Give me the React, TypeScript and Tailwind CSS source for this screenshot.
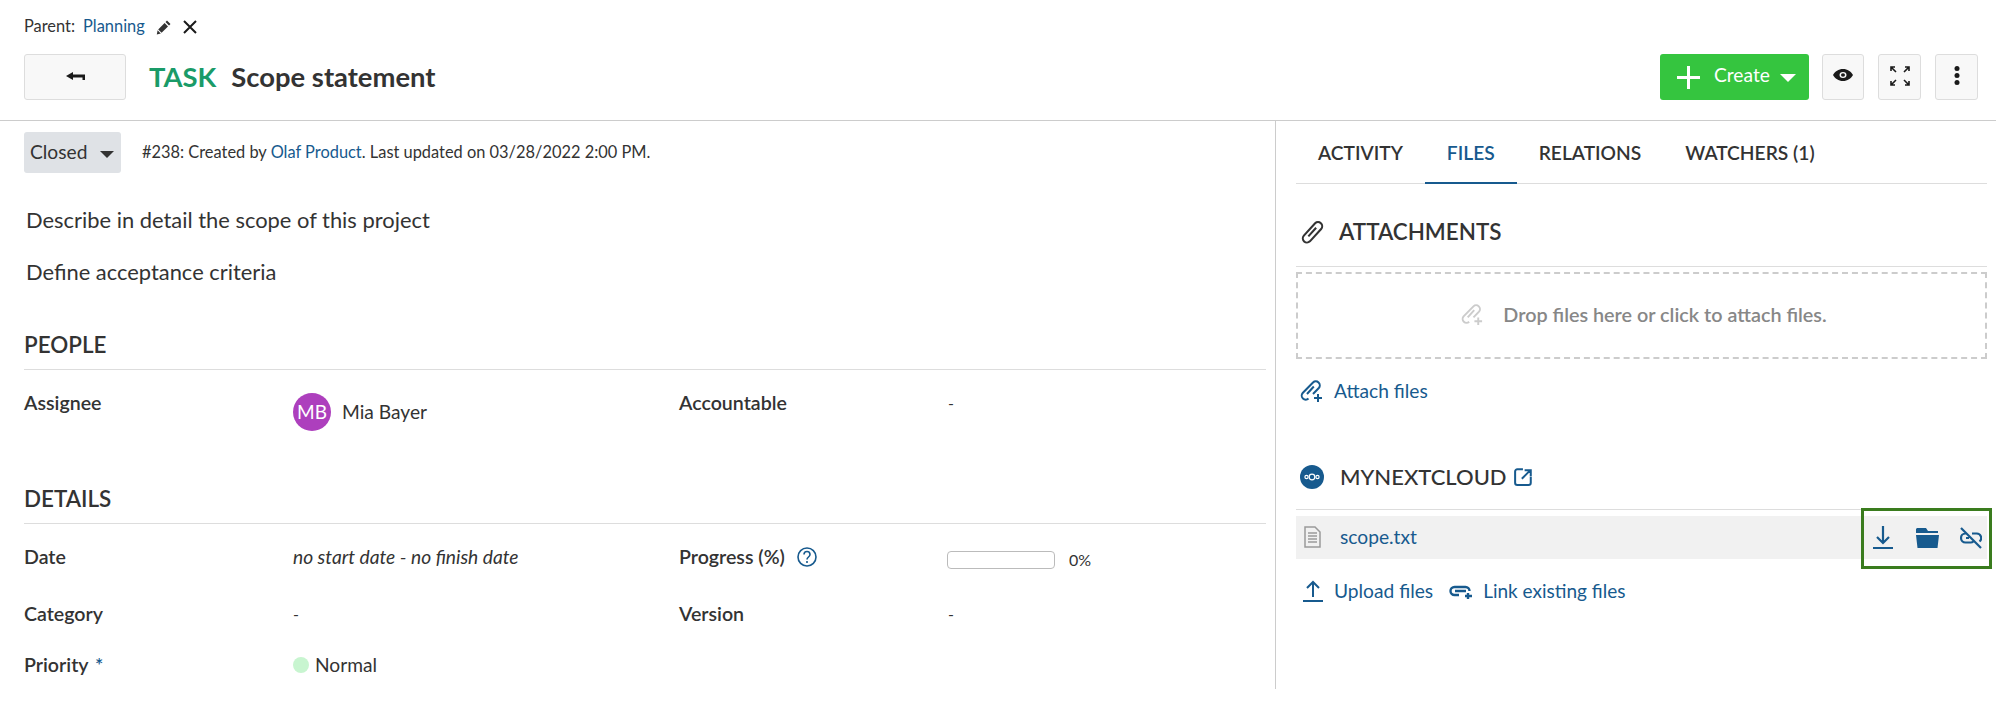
import type { ReactNode } from "react";

const blue = "#175a8e";

function Clip({ plus, size, className }: { plus?: boolean; size: number; className?: string }) {
  return (
    <svg width={size} height={size} viewBox="0 0 24 24" fill="none" stroke="currentColor" strokeWidth="2" className={className}>
      <path d={plus ? "M13 3.500a4 4 0 0 1 5.800 5.500L13 15M8.500 19.500a4 4 0 0 1-5.800-5.500L13 3.500M13.800 7.500 7 15" : "M14.500 3.200a4 4 0 0 1 5.800 5.500L9.500 20.500a4 4 0 0 1-5.800-5.500ZM15.500 7.500 8 15.700"} />
      {plus && <path d="M18 15v8M14 19h8" />}
    </svg>
  );
}

function SectionTitle({ children }: { children: ReactNode }) {
  return <h3 className="text-[22.4px] leading-[24px] font-semibold text-[#333] border-b border-[#dddddd] pb-[12px]">{children}</h3>;
}

function Label({ children }: { children: ReactNode }) {
  return <div className="text-[19.6px] leading-[24px] font-semibold text-[#333]">{children}</div>;
}

function Field({ label, children, className }: { label: ReactNode; children: ReactNode; className?: string }) {
  return (
    <div className={`flex ${className ?? ""}`}>
      <div className="w-[269px] shrink-0"><Label>{label}</Label></div>
      <div className="text-[16px] leading-[24px] text-[#333]">{children}</div>
    </div>
  );
}

function IconButton({ children, className }: { children: ReactNode; className?: string }) {
  return (
    <button className={`h-[46px] flex items-center justify-center bg-[#f8f8f8] border border-[#dddddd] rounded-[3px] text-[#1a1a1a] ${className ?? ""}`}>
      {children}
    </button>
  );
}

export default function App() {
  return (
    <div className="h-[709px] w-full overflow-hidden bg-white font-[Lato,sans-serif] text-[#333]">
      {/* Parent line */}
      <div className="h-[54px] pl-[24px] pt-[16px] flex items-start text-[16.4px] leading-[20px]">
        <span>Parent:</span>
        <a className="ml-[8px] text-[#175a8e]">Planning</a>
        <svg width="16" height="16" viewBox="0 0 16 16" className="ml-[11px] mt-[3px] text-[#333]" fill="currentColor">
          <path d="M11 1.500 14.500 5 13 6.500 9.500 3zM8.600 4l3.400 3.400L5.600 13.800 2.200 10.400zM1.600 11.200l3.200 3.200-4 1z" />
        </svg>
        <svg width="14" height="14" viewBox="0 0 14 14" className="ml-[11px] mt-[4px] text-[#1a1a1a]" stroke="currentColor" strokeWidth="2" fill="none">
          <path d="M1 1l12 12M13 1 1 13" />
        </svg>
      </div>

      {/* Toolbar */}
      <div className="h-[66px] pl-[24px] pr-[18px] flex items-start border-b border-[#cccccc] box-content">
        <IconButton className="w-[102px]">
          <svg width="19" height="8" viewBox="0 0 19 8" fill="currentColor" className="-mt-[2px]">
            <path d="M0 4 7 0v2.500h12V8h-2.500V5.500H7V8z" />
          </svg>
        </IconButton>
        <h2 className="ml-[23px] mt-[6px] text-[27.4px] leading-[34px] font-bold flex">
          <span className="text-[#1a9b68]">TASK</span>
          <span className="ml-[15px] text-[#333]">Scope statement</span>
        </h2>
        <div className="ml-auto flex">
          <button className="w-[149px] h-[46px] flex items-center bg-[#35c53f] rounded-[3px] text-white text-[19.2px] pl-[17px]">
            <svg width="23" height="23" viewBox="0 0 23 23" stroke="currentColor" strokeWidth="3" fill="none">
              <path d="M11.500 0v23M0 11.500h23" />
            </svg>
            <span className="ml-[14px] -mt-[4px]">Create</span>
            <span className="ml-[10px] w-0 h-0 border-x-[8px] border-x-transparent border-t-[8px] border-t-white mt-[2px]" />
          </button>
          <IconButton className="ml-[13px] w-[42px]">
            <svg width="20" height="12" viewBox="0 0 20 14" fill="currentColor" preserveAspectRatio="none" className="-mt-[4px]">
              <path fillRule="evenodd" d="M10 0c4.500 0 8 3 10 7-2 4-5.500 7-10 7S2 11 0 7c2-4 5.500-7 10-7zm0 3.500a3.500 3.500 0 1 0 0 7 3.500 3.500 0 0 0 0-7z" />
              <circle cx="10" cy="7" r="2" />
            </svg>
          </IconButton>
          <IconButton className="ml-[14px] w-[43px]">
            <svg width="20" height="20" viewBox="0 0 20 20" stroke="currentColor" strokeWidth="1.600" fill="none" className="-mt-[2px]">
              <path d="M1 5V1h4M1 1l5 5M15 1h4v4M19 1l-5 5M1 15v4h4M1 19l5-5M19 15v4h-4M19 19l-5-5" />
            </svg>
          </IconButton>
          <IconButton className="ml-[14px] w-[43px]">
            <svg width="6" height="19" viewBox="0 0 6 19" fill="currentColor" className="-mt-[3px]">
              <circle cx="3" cy="2.500" r="2.500" />
              <circle cx="3" cy="9.500" r="2.500" />
              <circle cx="3" cy="16.500" r="2.500" />
            </svg>
          </IconButton>
        </div>
      </div>

      <div className="flex">
        {/* Left column */}
        <div className="w-[1276px] h-[568px] shrink-0 border-r border-[#cccccc] pl-[24px] pr-[9px] pt-[11px]">
          <div className="flex items-center">
            <button className="w-[97px] h-[41px] flex items-center bg-[#dfe2e6] rounded-[3px] pl-[6px] text-[19.2px] text-[#333]">
              Closed
              <span className="ml-[13px] w-0 h-0 border-x-[7px] border-x-transparent border-t-[7px] border-t-[#333] mt-[3px]" />
            </button>
            <p className="ml-[21px] text-[16.4px] text-[#333]">
              #238: Created by <a className="text-[#175a8e]">Olaf Product</a>. Last updated on 03/28/2022 2:00 PM.
            </p>
          </div>

          <div className="mt-[32px] pl-[2px] text-[21.9px] leading-[30px] text-[#333]">
            <p>Describe in detail the scope of this project</p>
            <p className="mt-[22px]">Define acceptance criteria</p>
          </div>

          <div className="mt-[46px]">
            <SectionTitle>PEOPLE</SectionTitle>
            <div className="flex mt-[21px] h-[85px]">
              <Field label="Assignee" className="w-[655px]">
                <div className="flex items-center mt-[2px]">
                  <span className="w-[38px] h-[38px] rounded-full bg-[#ad3fbd] text-white text-[19px] flex items-center justify-center">MB</span>
                  <span className="ml-[11px] text-[19.2px]">Mia Bayer</span>
                </div>
              </Field>
              <Field label="Accountable">-</Field>
            </div>
          </div>

          <div className="mt-[11px]">
            <SectionTitle>DETAILS</SectionTitle>
            <div className="flex mt-[21px] h-[57px]">
              <Field label="Date" className="w-[655px]">
                <em className="text-[19.2px]">no start date - no finish date</em>
              </Field>
              <div className="flex">
                <div className="w-[268px] flex items-start">
                  <Label>Progress (%)</Label>
                  <svg width="20" height="20" viewBox="0 0 20 20" className="ml-[12px] mt-[2px] text-[#175a8e]" fill="none" stroke="currentColor" strokeWidth="1.600">
                    <circle cx="10" cy="10" r="9" />
                    <path d="M7 7.500c0-4 6-4 6 0 0 2.500-3 2.500-3 5M10 14v2" />
                  </svg>
                </div>
                <div className="flex items-center h-[30px]">
                  <div className="w-[108px] h-[18px] border border-[#bbbbbb] rounded-[4px]" />
                  <span className="ml-[14px] text-[16px]">0%</span>
                </div>
              </div>
            </div>
            <div className="flex h-[51px]">
              <Field label="Category" className="w-[655px]">-</Field>
              <Field label="Version">-</Field>
            </div>
            <Field label={<>Priority <span className="text-[#175a8e] ml-[2px]">*</span></>}>
              <div className="flex items-center">
                <span className="w-[16px] h-[16px] rounded-full bg-[#c8f5d0]" />
                <span className="ml-[6px] text-[19.2px]">Normal</span>
              </div>
            </Field>
          </div>
        </div>

        {/* Right column */}
        <div className="flex-1 pl-[20px] pr-[9px] relative">
          <div className="flex h-[63px] border-b border-[#dddddd] text-[19.2px] font-semibold">
            {[
              ["ACTIVITY", false],
              ["FILES", true],
              ["RELATIONS", false],
              ["WATCHERS (1)", false],
            ].map(([name, active]) => (
              <div
                key={String(name)}
                className={`px-[22px] pt-[20px] leading-[24px] h-[63px] ${active ? "text-[#175a8e] border-b-2 border-[#175a8e]" : "text-[#333]"}`}
              >
                {name}
              </div>
            ))}
          </div>

          <div className="mt-[36px]">
            <div className="flex items-center h-[24px] pl-[4px]">
              <Clip size={25} className="text-[#333]" />
              <h3 className="ml-[14px] text-[22.4px] font-semibold">ATTACHMENTS</h3>
            </div>
            <div className="mt-[22px] border-t border-[#dddddd]" />
            <div className="mt-[5px] h-[87px] border-2 border-dashed border-[#cccccc] flex items-center justify-center pb-[2px] pl-[5px]">
              <Clip plus size={23} className="text-[#cccccc]" />
              <span className="ml-[19px] text-[19.8px] font-semibold text-[#878787]">Drop files here or click to attach files.</span>
            </div>
            <div className="mt-[18px] flex items-center pl-[4px]" style={{ color: blue }}>
              <Clip plus size={24} />
              <span className="ml-[10px] text-[19.2px]">Attach files</span>
            </div>
          </div>

          <div className="mt-[59px]">
            <div className="flex items-center h-[24px] pl-[4px]">
              <svg width="24" height="24" viewBox="0 0 24 24" className="text-[#175a8e]">
                <circle cx="12" cy="12" r="12" fill="currentColor" />
                <g fill="none" stroke="white" strokeWidth="1.200">
                  <circle cx="12" cy="12" r="2.800" />
                  <circle cx="6.500" cy="12" r="1.600" />
                  <circle cx="17.500" cy="12" r="1.600" />
                </g>
              </svg>
              <h3 className="ml-[16px] text-[22px] font-medium">MYNEXTCLOUD</h3>
              <svg width="19" height="19" viewBox="0 0 17 17" className="ml-[7px] text-[#175a8e]" fill="none" stroke="currentColor" strokeWidth="1.800">
                <path d="M8 2H3a2 2 0 0 0-2 2v10a2 2 0 0 0 2 2h10a2 2 0 0 0 2-2V9M7 10.500 14 3.500M9.500 3h5.500v5.500" />
              </svg>
            </div>
            <div className="mt-[20px] border-t border-[#dddddd]" />
            <div className="mt-[6px] h-[43px] bg-[#f1f1f1] flex items-center pl-[8px]">
              <svg width="17" height="22" viewBox="0 0 17 22" className="text-[#9a9a9a]" fill="none" stroke="currentColor" strokeWidth="1.500">
                <path d="M1 1h10l5 5v15H1zM4 7h9M4 10h9M4 13h9M4 16h9" />
              </svg>
              <span className="ml-[19px] text-[19.2px]" style={{ color: blue }}>scope.txt</span>
            </div>
            <div className="mt-[18px] flex items-center pl-[7px] text-[19.2px]" style={{ color: blue }}>
              <svg width="20" height="22" viewBox="0 0 20 22" fill="none" stroke="currentColor" strokeWidth="2">
                <path d="M10 17V2M4 8l6-6 6 6M0 21h20" />
              </svg>
              <span className="ml-[11px]">Upload files</span>
              <svg width="24" height="16" viewBox="0 0 24 16" className="ml-[16px]" fill="none" stroke="currentColor" strokeWidth="2.400">
                <path d="M10 12H5.500a4 4 0 0 1 0-8h11a4 4 0 0 1 4 4M6 8h11M19 10v6M16 13h7" />
              </svg>
              <span className="ml-[10px] text-[19px]">Link existing files</span>
            </div>
          </div>

          {/* Highlight around the row actions */}
          <div className="absolute left-[585px] top-[387px] w-[131px] h-[61px] border-[3px] border-[#3a7c1e] flex items-start pt-[15px] text-[#175a8e]">
            <svg width="20" height="24" viewBox="0 0 20 24" className="ml-[9px]" fill="none" stroke="currentColor" strokeWidth="2.200">
              <path d="M10 0v17M4 11l6 6 6-6M0 22h20" />
            </svg>
            <svg width="23" height="20" viewBox="0 0 23 20" className="ml-[23px] mt-[2px]" fill="currentColor">
              <path d="M1 0h9l2 3h10v2H0V1zM0 7h23l-1.500 13h-20z" />
            </svg>
            <svg width="22" height="22" viewBox="0 0 22 22" className="ml-[21px] mt-[1px]" fill="none" stroke="currentColor" strokeWidth="2.200">
              <path d="M1 1l20 20M7 6.500H5.500a4.500 4.500 0 0 0 0 9h5a4.500 4.500 0 0 0 3-1M12 6.500h4.500a4.500 4.500 0 0 1 3 8M6 11h3" />
            </svg>
          </div>
        </div>
      </div>
    </div>
  );
}
